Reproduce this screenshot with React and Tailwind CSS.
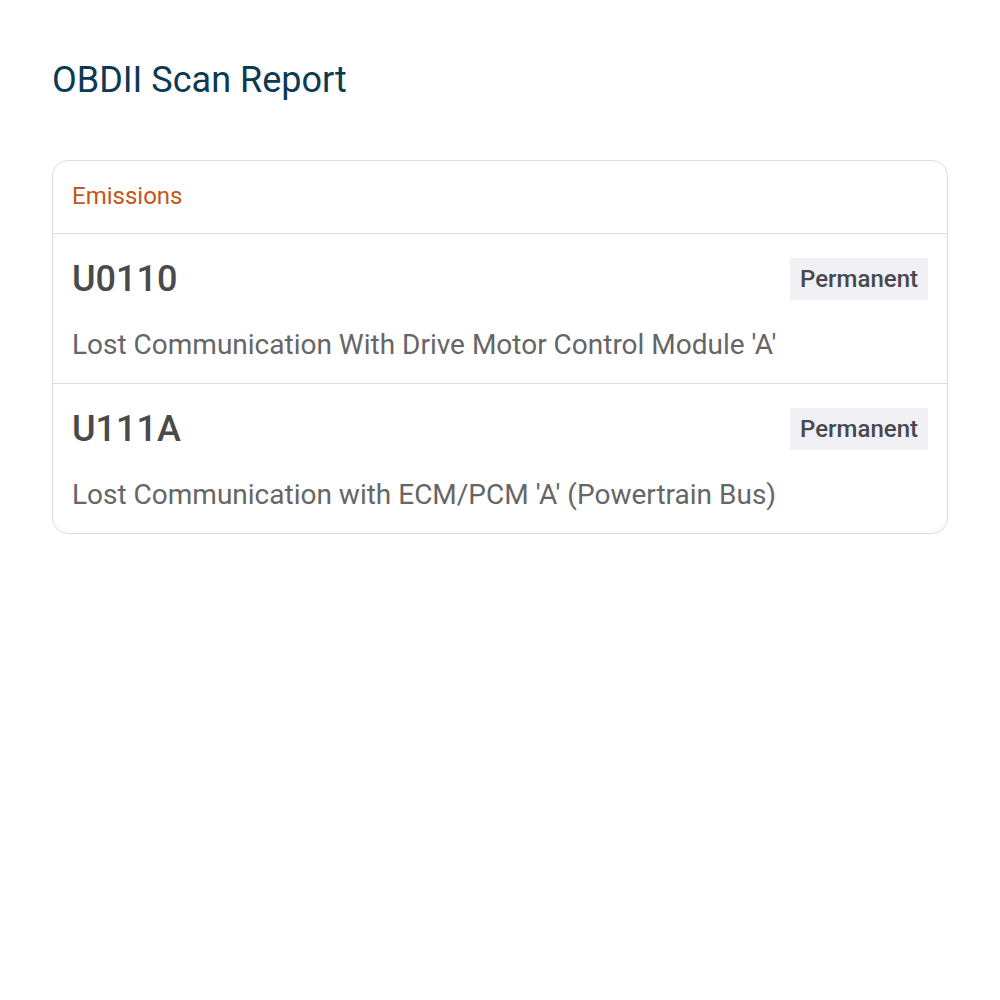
export default function App() {
  const codes = [
    { code: "U0110", status: "Permanent", desc: "Lost Communication With Drive Motor Control Module 'A'" },
    { code: "U111A", status: "Permanent", desc: "Lost Communication with ECM/PCM 'A' (Powertrain Bus)" },
  ];
  return (
    <div className="min-h-[1000px] bg-white px-[52px] pt-[56px]" style={{ fontFamily: "Roboto, 'Noto Sans', sans-serif" }}>
      <h1 className="text-[36px] leading-[48px] text-[#0b3a52]">OBDII Scan Report</h1>
      <div className="mt-[56px] rounded-[16px] border border-[#dcdcdc]">
        <div className="px-[19px] pt-[20px] pb-[22px] text-[24px] leading-[30px] text-[#c4561b]">Emissions</div>
        {codes.map((c) => (
          <div key={c.code} className="border-t border-[#dcdcdc] px-[19px] pt-[24px] pb-[20px]">
            <div className="flex h-[42px] items-center justify-between">
              <span className="text-[36px] font-medium text-[#4a4a4a]">{c.code}</span>
              <span className="flex h-[42px] items-center bg-[#f1f1f5] px-[10px] text-[24px] font-medium text-[#48484e]">{c.status}</span>
            </div>
            <div className="mt-[27px] text-[28px] leading-[36px] text-[#666]">{c.desc}</div>
          </div>
        ))}
      </div>
    </div>
  );
}
